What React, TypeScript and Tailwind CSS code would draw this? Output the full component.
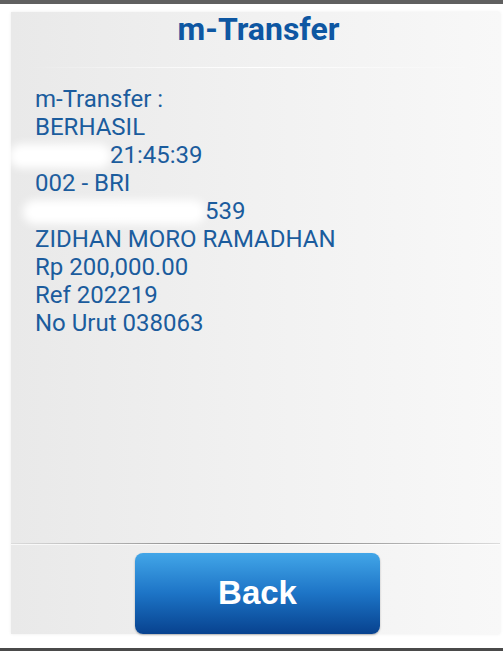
import React from "react";

export default function App() {
  const lines: React.ReactNode[] = [
    "m-Transfer :",
    "BERHASIL",
    <span key="t" className="relative block">
      <span className="absolute left-[-26px] top-[3px] h-[24px] w-[102px] rounded-full bg-white blur-[4px]" />
      <span className="inline-block w-[75px]" />
      <span className="relative">21:45:39</span>
    </span>,
    "002 - BRI",
    <span key="a" className="relative block">
      <span className="absolute left-[-12px] top-[3px] h-[24px] w-[182px] rounded-full bg-white blur-[4px]" />
      <span className="inline-block w-[170px]" />
      <span className="relative">539</span>
    </span>,
    "ZIDHAN MORO RAMADHAN",
    "Rp 200,000.00",
    "Ref 202219",
    "No Urut 038063",
  ];

  return (
    <div className="w-[503px] h-[651px] bg-white flex flex-col overflow-hidden">
      <div className="h-[4px] bg-[#606060]" />
      <div className="flex-1 pt-[8px] pl-[11px] pr-[3px] pb-[14px] flex">
        <div className="flex-1 flex flex-col bg-gradient-to-r from-[#e9e9e9] via-[#f1f1f1] to-[#f8f8f8] shadow-[0_0_3px_rgba(0,0,0,0.08)]">
          <div
            className="pt-[1px] pl-[6px] text-center text-[32px] leading-[32px] font-bold text-[#0e57a2]"
            style={{ fontFamily: "Roboto, 'Liberation Sans', sans-serif" }}
          >
            m-Transfer
          </div>
          <div className="mt-[22px] mx-[18px] h-[1px] bg-gradient-to-r from-transparent via-white to-transparent" />
          <div
            className="mt-[17px] pl-[24px] text-[24px] leading-[28px] text-[#1b5c9d]"
            style={{ fontFamily: "Roboto, 'Liberation Sans', sans-serif" }}
          >
            {lines.map((l, i) => (
              <div key={i}>{l}</div>
            ))}
          </div>
          <div className="flex-1" />
          <div className="h-[1px] bg-gradient-to-r from-[#dcdcdc] via-[#777777] to-[#dcdcdc]" />
          <div className="h-[1px] bg-white/70" />
          <div className="mt-[8px] flex justify-center pl-[4px]">
            <button
              className="w-[245px] h-[81px] pb-[2px] rounded-[8px] bg-gradient-to-b from-[#42a6e8] via-[#1d74c6] to-[#08428f] text-white text-[33px] font-bold shadow-[0_1px_2px_rgba(0,0,0,0.3)]"
              style={{ fontFamily: "'Liberation Sans', Arial, sans-serif" }}
            >
              Back
            </button>
          </div>
        </div>
      </div>
      <div className="h-[3px] bg-[#4a4a4a]" />
    </div>
  );
}
